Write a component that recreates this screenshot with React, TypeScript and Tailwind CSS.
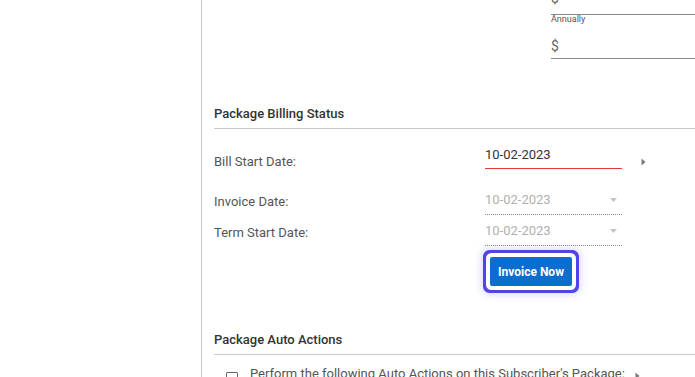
import React from 'react';

const CaretRight = () => (
  <svg width="5" height="8" viewBox="0 0 5 8" className="shrink-0">
    <path d="M0.5 0.5 L4.5 4 L0.5 7.5 Z" fill="#7a7a7a" />
  </svg>
);

const CaretDown = () => (
  <svg width="7" height="4" viewBox="0 0 7 4" className="shrink-0">
    <path d="M0 0 L7 0 L3.5 4 Z" fill="#c4c4c4" />
  </svg>
);

const SectionTitle: React.FC<{ children: React.ReactNode; className?: string }> = ({ children, className = '' }) => (
  <div className={`text-[13px] leading-[16px] font-medium text-[#333] pb-[6px] border-b border-[#c9c9c9] ${className}`}>
    {children}
  </div>
);

const DateRow: React.FC<{ label: string; value: string; className?: string }> = ({ label, value, className = '' }) => (
  <div className={`flex items-start ${className}`}>
    <div className="w-[271px] text-[13px] leading-[16px] text-[#555] mt-[2px]">{label}</div>
    <div className="w-[137px] flex items-center justify-between pr-[5px] text-[13px] leading-[16px] pb-[6px] border-b border-dotted border-[#8a8a8a] text-[#b0b0b0]">
      <span>{value}</span>
      <CaretDown />
    </div>
  </div>
);

export default function App() {
  return (
    <div className="flex h-[377px] overflow-hidden bg-white font-['Roboto',_'Liberation_Sans',_sans-serif]">
      <div className="w-[202px] shrink-0 border-r border-[#c6c6c6]" />
      <div className="flex-1 pl-[12px] min-w-0">
        {/* amount fields, the first one scrolled past the top */}
        <div className="ml-[337px] w-[150px]">
          <div className="-mt-[10px] h-[25px] border-b border-[#8a8a8a] text-[14px] leading-[16px] text-[#666]">$</div>
          <div className="-mt-[1px] text-[9px] leading-[10px] text-[#555]">Annually</div>
          <div className="h-[35px] pt-[14px] border-b border-[#8a8a8a] text-[14px] leading-[16px] text-[#666]">$</div>
        </div>

        <SectionTitle className="mt-[47px]">Package Billing Status</SectionTitle>

        <div className="flex items-start mt-[18px]">
          <div className="w-[271px] text-[13px] leading-[16px] text-[#555] mt-[7px]">Bill Start Date:</div>
          <div className="w-[137px] text-[13px] leading-[16px] text-[#333] pb-[5px] border-b border-[#e53935]">10-02-2023</div>
          <div className="ml-[19px] mt-[11px]">
            <CaretRight />
          </div>
        </div>

        <DateRow label="Invoice Date:" value="10-02-2023" className="mt-[22px]" />
        <DateRow label="Term Start Date:" value="10-02-2023" className="mt-[8px]" />

        <button className="ml-[276px] mt-[11px] w-[82px] h-[29px] rounded-[2px] bg-[#0b6ecf] text-white text-[12px] font-bold ring-[3px] ring-[#5146e3] ring-offset-[4px] ring-offset-white shadow-[0_0_8px_8px_rgba(110,100,240,0.28)]">
          Invoice Now
        </button>

        <SectionTitle className="mt-[46px]">Package Auto Actions</SectionTitle>

        <div className="flex items-start pl-[12px] mt-[11px]">
          <div className="w-[12px] h-[12px] mt-[6px] border border-[#666] rounded-[1px] shrink-0" />
          <div className="ml-[12px] text-[13px] leading-[16px] text-[#555] whitespace-nowrap">
            Perform the following Auto Actions on this Subscriber's Package:
          </div>
          <div className="ml-[10px] mt-[6px]">
            <CaretRight />
          </div>
        </div>
      </div>
    </div>
  );
}
